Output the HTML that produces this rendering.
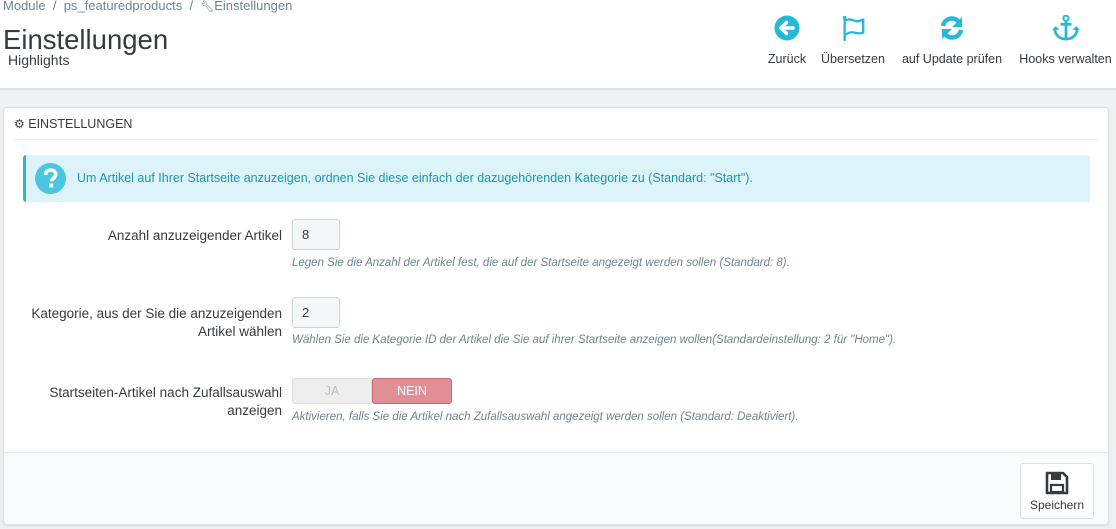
<!DOCTYPE html>
<html><head><meta charset="utf-8"><style>
*{margin:0;padding:0;box-sizing:border-box}
body{width:1116px;height:529px;background:#eff1f2;font-family:"Liberation Sans",sans-serif;color:#363a41;position:relative;overflow:hidden;font-size:13px}
.a{position:absolute;white-space:nowrap}
#hdr{position:absolute;left:0;top:0;width:1116px;height:90px;background:#fff;border-bottom:2px solid #dfe2e5}
.tb{position:absolute;top:15px;text-align:center;font-size:12.5px;color:#363a41}
.tb svg{display:block;margin:0 auto 11px}
#panel{position:absolute;left:3px;top:107px;width:1106px;height:418px;background:#fff;border:1px solid #dbe0e4;border-radius:4px;box-shadow:0 1px 2px rgba(0,0,0,.1)}
.lbl{position:absolute;right:826px;text-align:right;font-size:13.5px;line-height:18px;color:#363a41}
.inp{position:absolute;left:288px;width:48px;height:31px;background:#f5f8f9;border:1px solid #c7d6db;border-radius:3px;padding:7px 9px;font-size:13px}
.help{position:absolute;left:288px;font-size:11.5px;font-style:italic;color:#6c868e;white-space:nowrap}
</style></head><body>
<div id="hdr">
<div class="a" style="left:3px;top:-2px;font-size:13px;color:#6c868e">Module &nbsp;/&nbsp; ps_featuredproducts &nbsp;/&nbsp; <span style="font-size:11px">&#x1F527;&#xFE0E;</span>Einstellungen</div>
<div class="a" style="left:3px;top:24px;font-size:27.5px;color:#363a41">Einstellungen</div>
<div class="a" style="left:8px;top:52px;font-size:14px;color:#363a41">Highlights</div>
<div class="tb" style="left:766px;width:42px"><svg width="26" height="26" viewBox="0 0 26 26"><circle cx="13" cy="13" r="12.5" fill="#25b9d7"/><path d="M7 13h12M12.5 7.5L7 13l5.5 5.5" stroke="#fff" stroke-width="3.5" fill="none" stroke-linecap="round" stroke-linejoin="round"/></svg>Zurück</div>
<div class="tb" style="left:820px;width:66px"><svg width="32" height="26" viewBox="0 0 32 28"><circle cx="7" cy="3" r="2" fill="#25b9d7"/><path d="M7 3v25" stroke="#25b9d7" stroke-width="2.5"/><path d="M8 6c6-4 10 3 16 0c2-1 3-1 3-1v14c-6 3-11-3-17 1l-2 1" fill="none" stroke="#25b9d7" stroke-width="2.5"/></svg>Übersetzen</div>
<div class="tb" style="left:900px;width:104px"><svg width="26" height="26" viewBox="0 0 26 26"><path d="M4 11A9 9 0 0 1 20 7" stroke="#25b9d7" stroke-width="4.5" fill="none"/><path d="M23 2v10h-10z" fill="#25b9d7"/><path d="M22 15A9 9 0 0 1 6 19" stroke="#25b9d7" stroke-width="4.5" fill="none"/><path d="M3 24v-10h10z" fill="#25b9d7"/></svg>auf Update prüfen</div>
<div class="tb" style="left:1018px;width:95px"><svg width="30" height="26" viewBox="0 0 30 28"><circle cx="15" cy="3.5" r="2.8" fill="none" stroke="#25b9d7" stroke-width="2.2"/><path d="M15 6v19M9 10h12" stroke="#25b9d7" stroke-width="3"/><path d="M3 15c0 7 6 11 12 11s12-4 12-11" fill="none" stroke="#25b9d7" stroke-width="3"/><path d="M0 16l4-4 4 4zM22 16l4-4 4 4z" fill="#25b9d7"/></svg>Hooks verwalten</div>
</div>
<div id="panel">
<div class="a" style="left:10px;top:9px;font-size:12.5px;color:#363a41"><span style="font-size:12px">&#9881;</span> EINSTELLUNGEN</div>
<div style="position:absolute;left:10px;right:10px;top:31px;border-top:1px solid #eff1f2"></div>
<div style="position:absolute;left:19px;top:47px;width:1067px;height:47px;background:#dcf4f9;border-left:3px solid #25b9d7;border-radius:3px">
<svg style="position:absolute;left:9px;top:8px" width="31" height="31" viewBox="0 0 31 31"><circle cx="15.5" cy="15.5" r="15.5" fill="#4ac7e0"/><path d="M10.5 12c0-3 2.3-5 5.2-5s5 1.8 5 4.5c0 3.5-4.2 3.8-4.2 6.8" stroke="#fff" stroke-width="3.6" fill="none"/><rect x="14.2" y="20.5" width="4" height="4" fill="#fff"/></svg>
<div class="a" style="left:51px;top:16px;font-size:12.5px;color:#1e94ab">Um Artikel auf Ihrer Startseite anzuzeigen, ordnen Sie diese einfach der dazugehörenden Kategorie zu (Standard: "Start").</div>
</div>
<div class="lbl" style="top:119px">Anzahl anzuzeigender Artikel</div>
<div class="inp" style="top:111px">8</div>
<div class="help" style="top:149px">Legen Sie die Anzahl der Artikel fest, die auf der Startseite angezeigt werden sollen (Standard: 8).</div>
<div class="lbl" style="top:197px">Kategorie, aus der Sie die anzuzeigenden<br>Artikel wählen</div>
<div class="inp" style="top:189px">2</div>
<div class="help" style="top:226px">Wählen Sie die Kategorie ID der Artikel die Sie auf ihrer Startseite anzeigen wollen(Standardeinstellung: 2 für "Home").</div>
<div class="lbl" style="top:276px">Startseiten-Artikel nach Zufallsauswahl<br>anzeigen</div>
<div style="position:absolute;left:288px;top:270px;width:80px;height:26px;background:#eee;border:1px solid #ddd;border-radius:3px 0 0 3px;text-align:center;line-height:24px;color:#bbb;font-size:12.5px">JA</div>
<div style="position:absolute;left:368px;top:270px;width:80px;height:26px;background:#e08f95;border:1px solid #c96a72;border-radius:3px;text-align:center;line-height:24px;color:#fff;font-size:12.5px">NEIN</div>
<div class="help" style="top:303px">Aktivieren, falls Sie die Artikel nach Zufallsauswahl angezeigt werden sollen (Standard: Deaktiviert).</div>
<div style="position:absolute;left:0;right:0;top:344px;bottom:0;background:#fafbfc;border-top:1px solid #e5e8eb;border-radius:0 0 4px 4px">
<div style="position:absolute;left:1016px;top:10px;width:74px;height:56px;background:#fff;border:1px solid #dbe0e4;border-radius:3px;text-align:center;font-size:12px">
<svg style="display:block;margin:7px auto 3px" width="24" height="24" viewBox="0 0 24 24"><path d="M2 2h16l4 4v16H2z" fill="none" stroke="#363a41" stroke-width="2.6" stroke-linejoin="round"/><rect x="6" y="3" width="10" height="6" fill="#363a41"/><rect x="6" y="14" width="12" height="7" fill="none" stroke="#363a41" stroke-width="2.2"/></svg>Speichern</div>
</div>
</div>
</body></html>
